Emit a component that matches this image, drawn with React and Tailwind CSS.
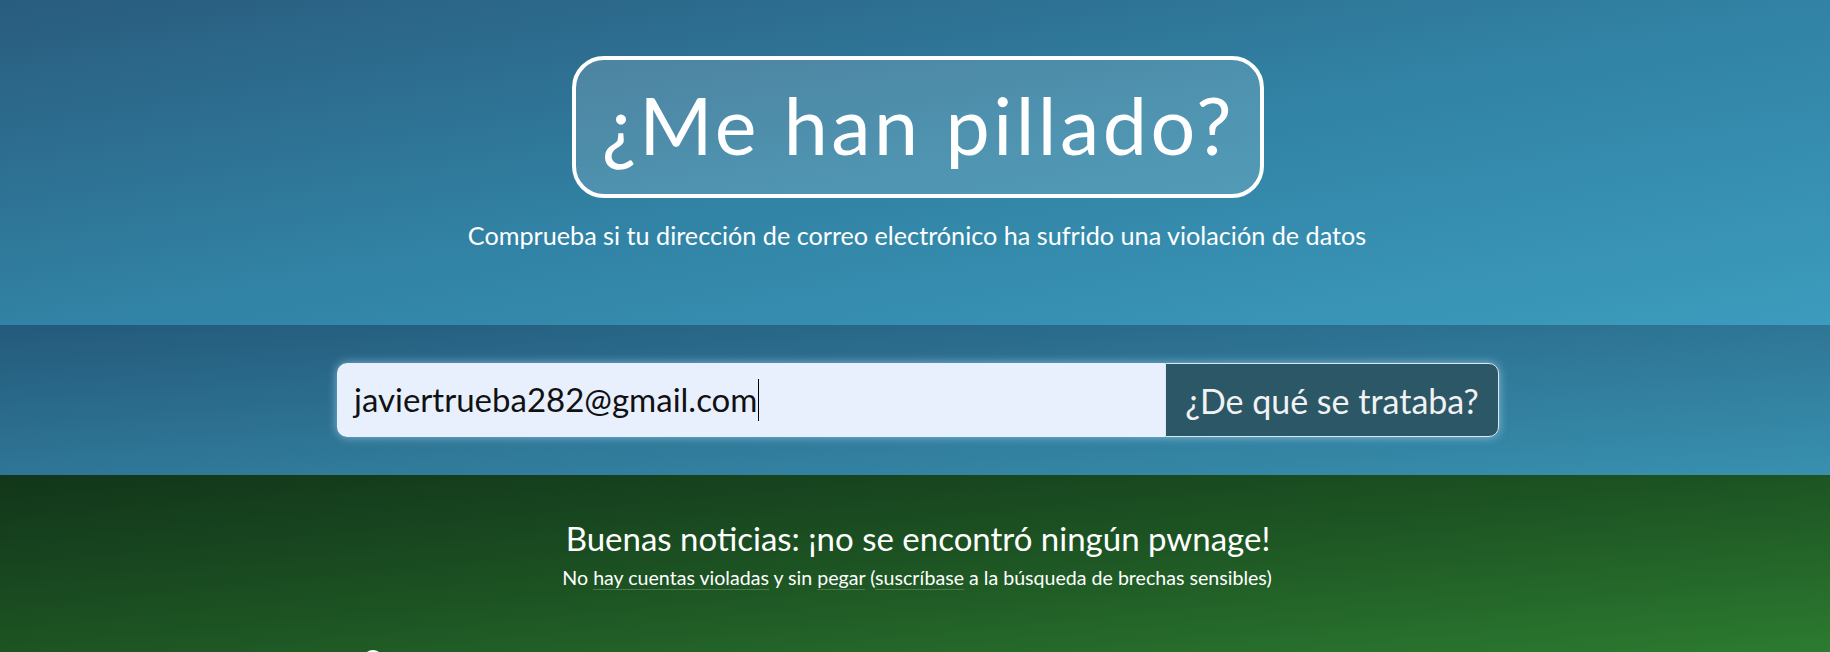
const App = () => {
    return (
        <div className="w-full h-[652px] overflow-hidden font-['Lato','Liberation_Sans',sans-serif] text-white">
            {/* Header */}
            <div className="h-[325px] bg-gradient-to-br from-[#295c7e] via-[#3182a4] to-[#3c9cbd] flex flex-col items-center pt-[56px]">
                <div className="ml-[5px] w-[692px] h-[142px] border-[4px] border-white rounded-[32px] bg-white/15 flex items-center justify-center">
                    <h1 className="text-[79px] leading-none tracking-[3.5px] font-normal pb-[6px] pl-[2px]">¿Me han pillado?</h1>
                </div>
                <p className="mt-[22px] text-[25.2px] leading-[30px] pl-[4px]">Comprueba si tu dirección de correo electrónico ha sufrido una violación de datos</p>
            </div>

            {/* Search */}
            <div className="h-[150px] bg-gradient-to-br from-[#245a7b] via-[#2f7696] to-[#3890af] flex justify-center pt-[38px] pl-[6px]">
                <div className="flex w-[1162px] h-[74px] rounded-[10px] shadow-[0_0_10px_rgba(170,215,245,0.7)]">
                    <div className="flex-1 bg-[#e8f0fe] rounded-l-[10px] flex items-center pl-[17px] text-[#111] text-[33px]">
                        <span>javiertrueba282@gmail.com</span>
                        <span className="inline-block w-px h-[42px] bg-black ml-[1px]"></span>
                    </div>
                    <button className="w-[334px] bg-[#2c5767] border border-[#dfe8ee] rounded-r-[10px] text-[#f2f2f2] text-[34px] flex items-center justify-center">
                        ¿De qué se trataba?
                    </button>
                </div>
            </div>

            {/* Result */}
            <div className="h-[177px] bg-gradient-to-br from-[#12361a] via-[#1d5423] to-[#2c7b30] flex flex-col items-center pt-[42px] relative">
                <h2 className="text-[33px] leading-[42px] font-normal pl-[6px]">Buenas noticias: ¡no se encontró ningún pwnage!</h2>
                <p className="mt-[6px] text-[19.6px] leading-[26px] pl-[4px]">
                    No <span className="border-b border-[#4a7a4a]">hay cuentas violadas</span> y sin <span className="border-b border-[#4a7a4a]">pegar</span> (<span className="border-b border-[#4a7a4a]">suscríbase</span> a la búsqueda de brechas sensibles)
                </p>
                <div className="absolute left-[363px] top-[175px] w-[20px] h-[20px] rounded-full border-2 border-white"></div>
            </div>
        </div>
    );
};

export default App;
